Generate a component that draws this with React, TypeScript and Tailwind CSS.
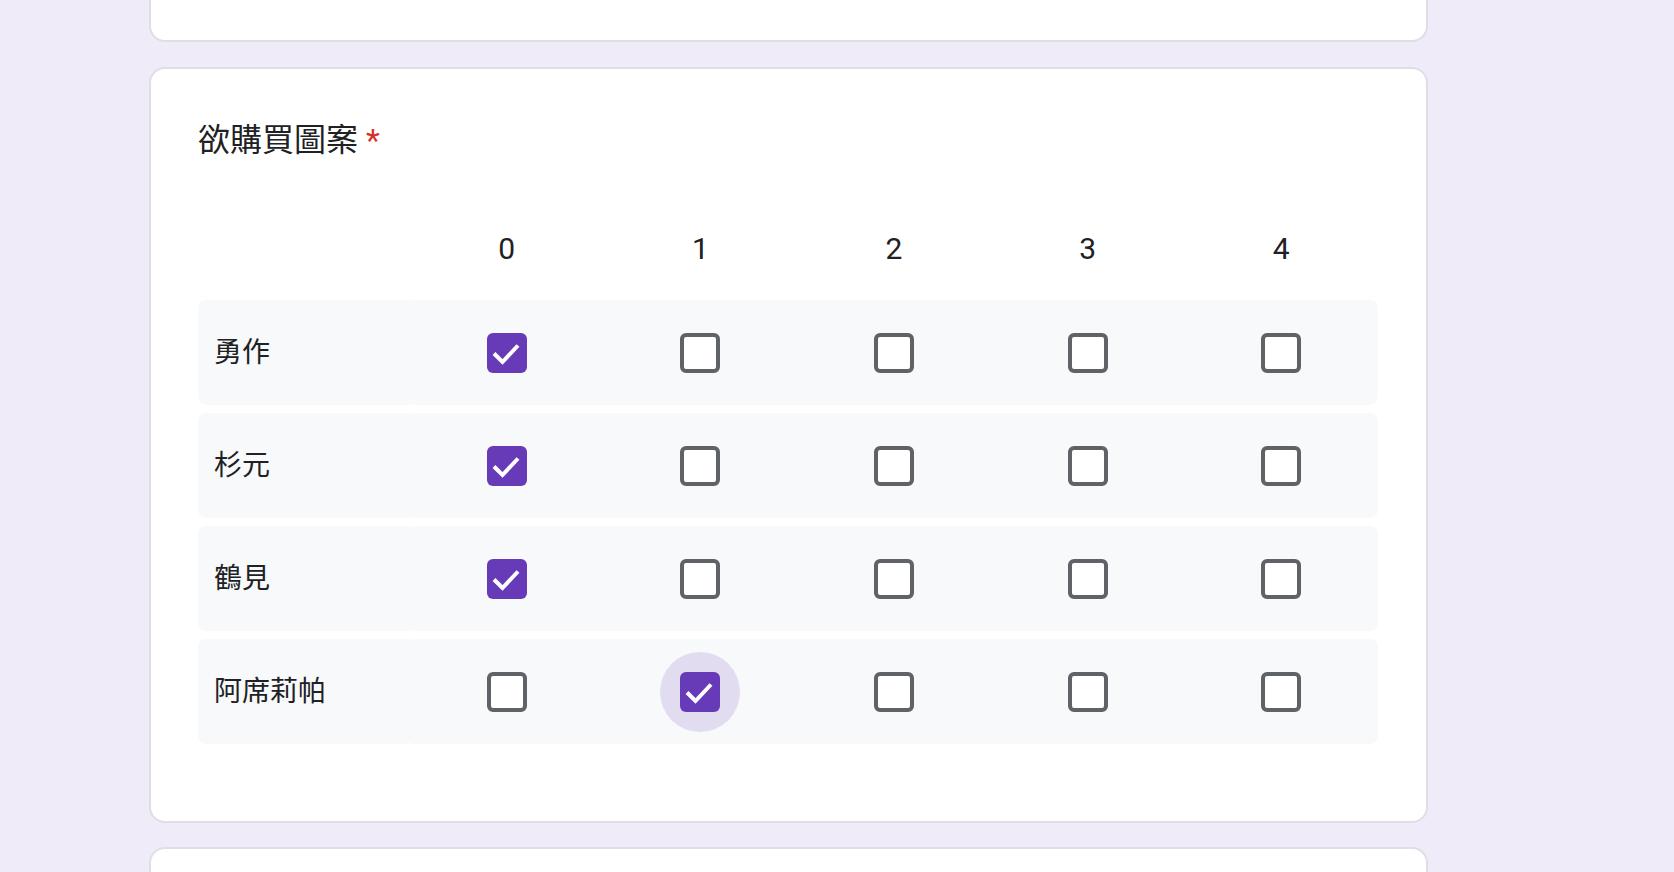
import React from 'react'

const FONT = 'font-["Roboto","Noto_Sans_CJK_TC",sans-serif]'

const rows = [
  { label: '勇作', value: 0 },
  { label: '杉元', value: 0 },
  { label: '鶴見', value: 0 },
  { label: '阿席莉帕', value: 1 },
]

const columns = [0, 1, 2, 3, 4]

const CheckBox = ({ checked, focused }: { checked: boolean; focused?: boolean }) => {
  return (
    <div className="relative flex h-[40px] w-[40px] items-center justify-center">
      {focused && (
        <div className="absolute left-1/2 top-1/2 h-[80px] w-[80px] -translate-x-1/2 -translate-y-1/2 rounded-full bg-[#e2dcf0]" />
      )}
      {checked ? (
        <div className="relative h-[40px] w-[40px] rounded-[6px] bg-[#673ab7]">
          <svg viewBox="0 0 40 40" className="h-[40px] w-[40px]">
            <path d="M7 20.5 L15.5 29 L31 12.5" fill="none" stroke="#fff" strokeWidth="4" />
          </svg>
        </div>
      ) : (
        <div className="relative h-[40px] w-[40px] rounded-[6px] border-4 border-[#5f6368] bg-white" />
      )}
    </div>
  )
}

export default function App() {
  return (
    <div className={`h-[872px] w-full overflow-hidden bg-[#f0ebf8] ${FONT}`}>
      {/* previous card, cut off by the top of the window */}
      <div className="ml-[149px] h-[42px] w-[1279px] rounded-b-2xl border-2 border-t-0 border-[#dfdde5] bg-white" />

      {/* question card */}
      <div className="ml-[149px] mt-[25px] w-[1279px] rounded-2xl border-2 border-[#dfdde5] bg-white pb-[77px] pl-[47px] pr-[48px] pt-[47px]">
        <div className="flex items-center text-[32px] leading-[48px] text-[#202124]">
          <span>欲購買圖案</span>
          <span className="ml-[8px] text-[#d93025]">*</span>
        </div>

        {/* column headers */}
        <div className="mb-[12px] mt-[44px] flex h-[80px] items-center">
          <div className="w-[212px]" />
          {columns.map((c) => (
            <div key={c} className="flex-1 text-center text-[30px] text-[#202124]">
              {c}
            </div>
          ))}
        </div>

        <div className="flex flex-col gap-[8px]">
          {rows.map((row, i) => (
            <div key={row.label} className="flex h-[105px]">
              <div className="flex w-[212px] items-center rounded-l-lg rounded-r-[3px] bg-[#f8f9fa] pl-[16px] text-[28px] text-[#202124]">
                {row.label}
              </div>
              <div className="flex flex-1 rounded-l-[3px] rounded-r-lg bg-[#f8f9fa]">
                {columns.map((c) => (
                  <div key={c} className="flex flex-1 items-center justify-center">
                    <CheckBox checked={row.value === c} focused={i === 3 && c === 1} />
                  </div>
                ))}
              </div>
            </div>
          ))}
        </div>
      </div>

      {/* next card */}
      <div className="ml-[149px] mt-[24px] h-[100px] w-[1279px] rounded-t-2xl border-2 border-b-0 border-[#dfdde5] bg-white" />
    </div>
  )
}
